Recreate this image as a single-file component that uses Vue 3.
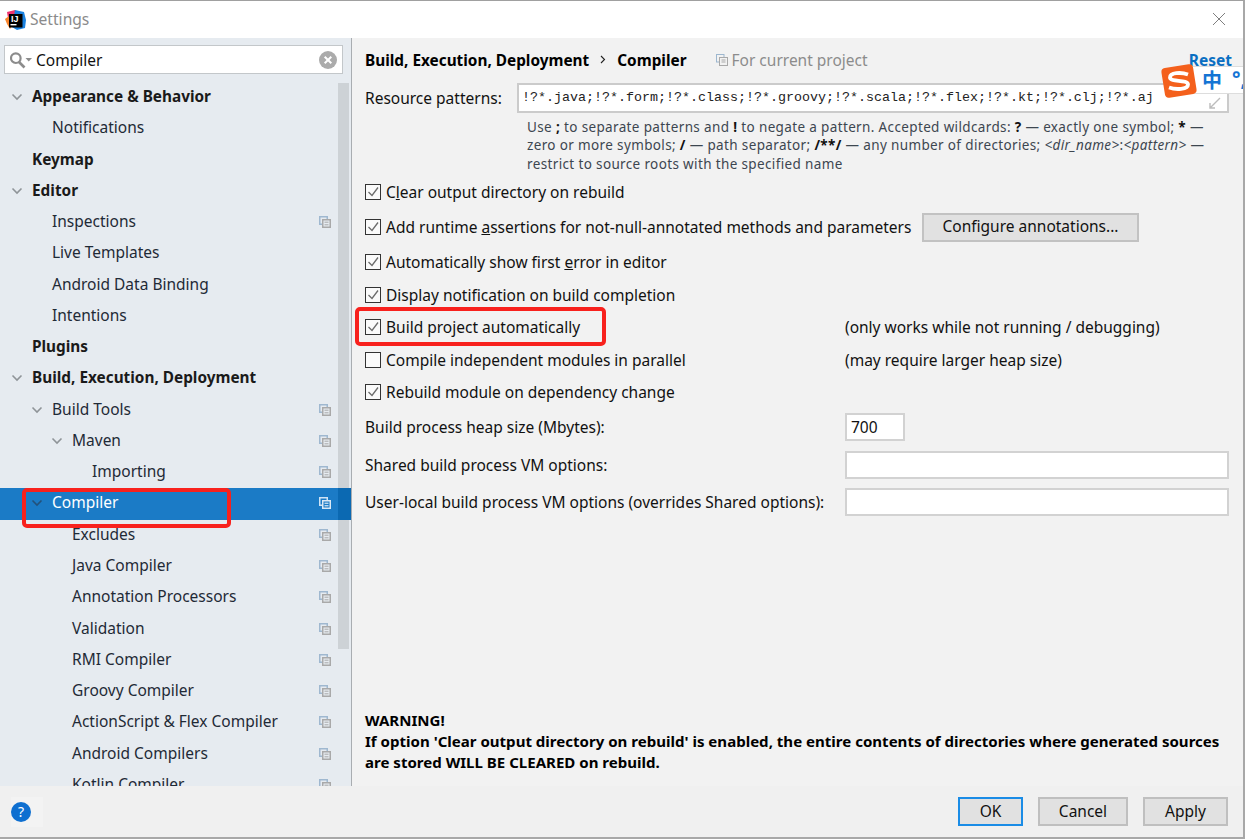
<script setup>
const tree = [
  { t: 'Appearance & Behavior', l: 0, b: 1, c: 1 },
  { t: 'Notifications', l: 1 },
  { t: 'Keymap', l: 0, b: 1 },
  { t: 'Editor', l: 0, b: 1, c: 1 },
  { t: 'Inspections', l: 1, p: 1 },
  { t: 'Live Templates', l: 1 },
  { t: 'Android Data Binding', l: 1 },
  { t: 'Intentions', l: 1 },
  { t: 'Plugins', l: 0, b: 1 },
  { t: 'Build, Execution, Deployment', l: 0, b: 1, c: 1 },
  { t: 'Build Tools', l: 1, c: 1, p: 1 },
  { t: 'Maven', l: 2, c: 1, p: 1 },
  { t: 'Importing', l: 3, p: 1 },
  { t: 'Compiler', l: 1, c: 1, p: 1, s: 1 },
  { t: 'Excludes', l: 2, p: 1 },
  { t: 'Java Compiler', l: 2, p: 1 },
  { t: 'Annotation Processors', l: 2, p: 1 },
  { t: 'Validation', l: 2, p: 1 },
  { t: 'RMI Compiler', l: 2, p: 1 },
  { t: 'Groovy Compiler', l: 2, p: 1 },
  { t: 'ActionScript & Flex Compiler', l: 2, p: 1 },
  { t: 'Android Compilers', l: 2, p: 1 },
  { t: 'Kotlin Compiler', l: 2, p: 1 }
]
const indent = (l) => ({ paddingLeft: 32 + l * 20 + 'px' })
const chevronLeft = (l) => ({ left: 11 + l * 20 + 'px' })
</script>

<template>
  <div class="window">
    <header class="titlebar">
      <span class="logo">
        <svg width="21" height="20" viewBox="0 0 21 20">
          <path d="M2 2 L10 0 L13 8 L4 14Z" fill="#f0326e" />
          <path d="M0 9 L4 6 L8 14 L5 19 L2 14Z" fill="#f9862d" />
          <path d="M10 0 L19 2 L21 10 L20 18 L12 20 L7 17Z" fill="#1b82e0" />
          <rect x="4" y="4" width="13.5" height="13.5" fill="#000" />
          <rect x="5.5" y="14" width="6" height="1.4" fill="#fff" />
        </svg>
        <span class="logo-text">IJ</span>
      </span>
      <span class="title">Settings</span>
      <svg class="close" width="14" height="14" viewBox="0 0 14 14">
        <path d="M1 1 L13 13 M13 1 L1 13" stroke="#7f7f7f" stroke-width="1" fill="none" />
      </svg>
    </header>

    <div class="body">
      <aside class="sidebar">
        <div class="search">
          <svg width="24" height="18" viewBox="0 0 24 18">
            <circle cx="5.8" cy="7.2" r="4.8" fill="none" stroke="#8c8c8c" stroke-width="2.2" />
            <path d="M9 11 L14.5 16.5" stroke="#8c8c8c" stroke-width="2.6" />
            <path d="M15.5 7 H22 L18.75 10.5Z" fill="#8c8c8c" />
          </svg>
          <span class="search-text">Compiler</span>
          <svg class="clear" width="18" height="18" viewBox="0 0 18 18">
            <circle cx="9" cy="9" r="9" fill="#ababab" />
            <path d="M5.7 5.7 L12.3 12.3 M12.3 5.7 L5.7 12.3" stroke="#fff" stroke-width="2" />
          </svg>
        </div>
        <div class="tree-wrap">
          <div class="scroll-track"><div class="scroll-thumb"></div></div>
          <div class="tree">
            <div
              v-for="n in tree"
              :key="n.t"
              class="node"
              :class="{ bold: n.b, sel: n.s }"
              :style="indent(n.l)"
            >
              <svg v-if="n.c" class="chev" :style="chevronLeft(n.l)" width="12" height="8" viewBox="0 0 12 8">
                <path d="M1.5 1.5 L6 6 L10.5 1.5" fill="none" stroke-width="1.6" />
              </svg>
              <span>{{ n.t }}</span>
              <svg v-if="n.p" class="proj" width="12" height="12" viewBox="0 0 12 12">
                <rect class="back" x=".75" y=".75" width="7.5" height="7.5" />
                <rect class="front" x="3.75" y="3.75" width="7.5" height="7.5" />
                <path class="lines" d="M5.5 6.2 H9.5 M5.5 8.8 H9.5" />
              </svg>
            </div>
          </div>
        </div>
      </aside>

      <main class="content">
        <div class="crumbs">
          <b>Build, Execution, Deployment</b>
          <svg class="sep" width="6" height="9" viewBox="0 0 6 9"><path d="M1 1 L4.5 4.5 L1 8" fill="none" stroke="#222" stroke-width="1.1" /></svg>
          <b>Compiler</b>
          <svg class="cur-proj" width="12" height="12" viewBox="0 0 12 12">
            <rect x=".5" y=".5" width="7.5" height="7.5" fill="none" stroke="#9db7cf" />
            <rect x="3.5" y="3.5" width="8" height="8" fill="#f2f2f2" stroke="#a9a9a9" />
            <path d="M5.5 6 H9.5 M5.5 8 H9.5" stroke="#a9a9a9" />
          </svg>
          <span class="for-proj">For current project</span>
          <a class="reset">Reset</a>
        </div>

        <div class="patterns">
          <label>Resource patterns:</label>
          <div class="pattern-input">
            <span>!?*.java;!?*.form;!?*.class;!?*.groovy;!?*.scala;!?*.flex;!?*.kt;!?*.clj;!?*.aj</span>
            <svg class="expand" width="12" height="12" viewBox="0 0 12 12">
              <path d="M11 1 L1 11 M1 6 V11 H6" fill="none" stroke="#bcbcbc" stroke-width="1.4" />
            </svg>
          </div>
        </div>
        <p class="help">
          Use <b>;</b> to separate patterns and <b>!</b> to negate a pattern. Accepted wildcards: <b>?</b> — exactly one symbol; <b>*</b> —<br />
          zero or more symbols; <b>/</b> — path separator; <b>/**/</b> — any number of directories; <i>&lt;dir_name&gt;</i>:<i>&lt;pattern&gt;</i> —<br />
          restrict to source roots with the specified name
        </p>

        <div class="opt"><span class="box"><svg viewBox="0 0 14 14"><path d="M2.5 7 L6 10.5 L12 2.5" /></svg></span><span>C<u>l</u>ear output directory on rebuild</span></div>
        <div class="opt tall">
          <span class="box"><svg viewBox="0 0 14 14"><path d="M2.5 7 L6 10.5 L12 2.5" /></svg></span>
          <span class="wide">Add runtime <u>a</u>ssertions for not-null-annotated methods and parameters</span>
          <button class="annot">Configure annotations...</button>
        </div>
        <div class="opt"><span class="box"><svg viewBox="0 0 14 14"><path d="M2.5 7 L6 10.5 L12 2.5" /></svg></span><span>Automatically show first <u>e</u>rror in editor</span></div>
        <div class="opt"><span class="box"><svg viewBox="0 0 14 14"><path d="M2.5 7 L6 10.5 L12 2.5" /></svg></span><span>Display notification on build completion</span></div>
        <div class="opt">
          <span class="box"><svg viewBox="0 0 14 14"><path d="M2.5 7 L6 10.5 L12 2.5" /></svg></span>
          <span class="lab">Build project automatically</span>
          <span class="note">(only works while not running / debugging)</span>
        </div>
        <div class="opt">
          <span class="box"></span>
          <span class="lab">Compile independent modules in parallel</span>
          <span class="note">(may require larger heap size)</span>
        </div>
        <div class="opt"><span class="box"><svg viewBox="0 0 14 14"><path d="M2.5 7 L6 10.5 L12 2.5" /></svg></span><span>Rebuild module on dependency change</span></div>

        <div class="fields">
          <label>Build process heap size (Mbytes):</label>
          <div class="field short">700</div>
          <label>Shared build process VM options:</label>
          <div class="field"></div>
          <label>User-local build process VM options (overrides Shared options):</label>
          <div class="field"></div>
        </div>

        <div class="warning">
          WARNING!<br />
          If option 'Clear output directory on rebuild' is enabled, the entire contents of directories where generated sources<br />
          are stored WILL BE CLEARED on rebuild.
        </div>
      </main>
    </div>

    <footer class="footer">
      <div class="help-btn"><span>?</span></div>
      <div class="buttons">
        <button class="btn ok">OK</button>
        <button class="btn cancel">Cancel</button>
        <button class="btn apply">Apply</button>
      </div>
    </footer>

    <div class="mark mark-tree"></div>
    <div class="mark mark-opt"></div>

    <div class="ime">
      <svg class="ime-s" width="38" height="36" viewBox="0 0 38 36">
        <rect x="3" y="3" width="32" height="30" rx="4" fill="#f4601c" transform="rotate(-9 19 18)" />
        <path d="M28 11.5 C21 9 10 9.5 10 14.5 C10 19.5 28 16 28 21.5 C28 26.5 16 27 9 24.5" fill="none" stroke="#fff" stroke-width="3.8" />
      </svg>
      <span class="ime-zh">中</span>
      <span class="ime-p">°,</span>
    </div>
  </div>
</template>

<style>
html, body { margin: 0; padding: 0; background: #fff; }
</style>

<style scoped>
.window {
  position: relative;
  width: 1245px;
  height: 839px;
  box-sizing: border-box;
  border-top: 1px solid #a0a0a0;
  border-right: 2px solid #a8a8a8;
  border-bottom: 2px solid #a8a8a8;
  display: flex;
  flex-direction: column;
  overflow: hidden;
  font-family: "Noto Sans", "Open Sans", sans-serif;
  font-size: 15.5px;
  color: #1a1a1a;
  background: #f2f2f2;
}
.titlebar {
  position: relative;
  height: 37px;
  flex: none;
  box-sizing: border-box;
  background: #fff;
  display: flex;
  align-items: center;
  padding: 0 0 2px 5px;
}
.logo { position: relative; flex: none; width: 21px; height: 20px; margin-top: 2px; }
.logo svg { display: block; }
.logo-text {
  position: absolute;
  left: 6px;
  top: 4px;
  font: bold 9px/10px "Liberation Sans", sans-serif;
  color: #fff;
}
.title { margin-left: 4px; color: #8b8b8b; font-size: 15.6px; }
.close { margin-left: auto; margin-right: 17px; }

.body { flex: 1; min-height: 0; display: flex; }
.sidebar {
  width: 352px;
  box-sizing: border-box;
  flex: none;
  background: #e6ebf0;
  border-right: 1px solid #a9adb1;
  display: flex;
  flex-direction: column;
  min-height: 0;
}
.search {
  margin: 7px 8px 0 4px;
  height: 29px;
  flex: none;
  box-sizing: border-box;
  background: #fff;
  border: 1px solid #c3c7ca;
  display: flex;
  align-items: center;
  padding: 0 5px;
}
.search-text { margin-left: 2px; color: #111; }
.clear { margin-left: auto; }
.tree-wrap { position: relative; flex: 1; min-height: 0; overflow: hidden; margin-top: 8px; }
.tree { position: relative; font-size: 15.5px; }
.scroll-track {
  position: absolute;
  right: 0;
  top: 0;
  bottom: 0;
  width: 13px;
  background: #e6ebf0;
}
.scroll-thumb {
  position: absolute;
  left: 0;
  top: 1px;
  width: 11px;
  height: 566px;
  background: #cdd2d6;
}
.node {
  position: relative;
  height: 31.27px;
  line-height: 29px;
  white-space: nowrap;
  color: #1f2a36;
}
.node.bold { font-weight: 700; color: #1a1a1a; font-size: 15.35px; }
.node.sel { background: #1b7bc6; color: #fff; }
.node.sel::after {
  content: "";
  position: absolute;
  right: 0;
  top: 0;
  bottom: 0;
  width: 13px;
  background: #0b69b2;
}
.chev { position: absolute; top: 11px; stroke: #8f9498; }
.sel .chev { stroke: #24517a; }
.proj { position: absolute; left: 319px; top: 9px; z-index: 1; }
.proj .back { fill: none; stroke: #9fb8d0; stroke-width: 1.5; }
.proj .front { fill: #e6ebf0; stroke: #a9a9a9; stroke-width: 1.5; }
.proj .lines { stroke: #a9a9a9; }
.sel .proj .back { stroke: #cfe3f5; }
.sel .proj .front { fill: #1b7bc6; stroke: #d9e8f5; }
.sel .proj .lines { stroke: #fff; }

.content {
  flex: 1;
  min-width: 0;
  box-sizing: border-box;
  padding: 0 14px 13px 13px;
  display: flex;
  flex-direction: column;
  background: #f2f2f2;
}
.crumbs {
  height: 45px;
  flex: none;
  box-sizing: border-box;
  padding-bottom: 2px;
  display: flex;
  align-items: center;
  color: #000;
}
.crumbs b { font-size: 15.35px; }
.sep { margin: 0 11px 0 11px; }
.cur-proj { margin-left: 29px; }
.for-proj { margin-left: 4px; color: #8c8c8c; }
.reset { margin-left: auto; color: #0a6fc2; font-weight: 700; margin-right: -3px; }
.patterns { display: flex; align-items: center; height: 30px; flex: none; }
.patterns label { width: 152px; flex: none; color: #111; }
.pattern-input {
  position: relative;
  flex: 1;
  height: 30px;
  box-sizing: border-box;
  background: #fff;
  border: 2px solid #cbcbcb;
  padding-left: 3px;
  line-height: 25px;
  font-family: "Liberation Mono", monospace;
  font-size: 13.33px;
  white-space: nowrap;
  color: #222;
}
.expand { position: absolute; right: 6px; bottom: 2px; }
.help {
  margin: 4.5px 0 0 162px;
  font-size: 13.5px;
  line-height: 18.5px;
  color: #3d4650;
  white-space: nowrap;
  letter-spacing: 0.36px;
}
.help b { color: #111; }
.opt {
  height: 32.5px;
  flex: none;
  display: flex;
  align-items: center;
  color: #111;
  white-space: nowrap;
}
.help + .opt { margin-top: 3px; }
.opt.tall { height: 37.5px; }
.box {
  width: 14px;
  height: 14px;
  flex: none;
  border: 1px solid #333;
  background: #fafafa;
  margin-right: 5px;
  display: block;
}
.box svg { display: block; width: 14px; height: 14px; }
.box path { fill: none; stroke: #6b6b6b; stroke-width: 1.3; }
.lab { width: 459px; flex: none; }
.wide { width: 536px; flex: none; }
.note { color: #111; }
.annot {
  width: 217px;
  height: 29px;
  box-sizing: border-box;
  background: #e1e1e1;
  border: 2px solid #c2c2c2;
  font: inherit;
  color: #111;
  padding: 0 0 2px;
}
.fields {
  display: grid;
  grid-template-columns: 480px 1fr;
  row-gap: 9.5px;
  align-items: center;
  margin-top: 4.5px;
  flex: none;
}
.fields label { color: #111; white-space: nowrap; }
.field {
  height: 28px;
  box-sizing: border-box;
  background: #fff;
  border: 2px solid #d2d2d2;
  line-height: 24px;
  padding-left: 4px;
  color: #111;
}
.field.short { width: 60px; }
.warning {
  margin-top: auto;
  font-weight: 700;
  line-height: 21px;
  color: #000;
  white-space: nowrap;
  font-size: 15.05px;
}

.footer {
  height: 51px;
  flex: none;
  background: #f0f0f0;
  display: flex;
  align-items: center;
  padding: 0 15px 0 11px;
  position: relative;
}
.help-btn {
  width: 32px;
  height: 30px;
  display: flex;
  align-items: center;
  background: #f3f3f3;
}
.help-btn span {
  width: 20px;
  height: 20px;
  border-radius: 50%;
  background: #0e6fd0;
  color: #fff;
  font-size: 14px;
  line-height: 20px;
  text-align: center;
}
.buttons { margin-left: auto; display: flex; gap: 15px; }
.btn {
  height: 29px;
  box-sizing: border-box;
  background: #e1e1e1;
  border: 2px solid #bfbfbf;
  font: inherit;
  color: #111;
  padding: 0 0 2px;
}
.ok { width: 65px; border-color: #1a8ce6; }
.cancel { width: 90px; }
.apply { width: 85px; }

.mark { position: absolute; border: 4px solid #f8211d; border-radius: 5px; box-sizing: border-box; pointer-events: none; }
.mark-tree { left: 22px; top: 487px; width: 209px; height: 40px; }
.mark-opt { left: 355px; top: 306px; width: 251px; height: 39px; }

.ime {
  position: absolute;
  left: 1178px;
  top: 65px;
  width: 67px;
  height: 28px;
  background: #fff;
  border: 1px solid #ddd;
  box-sizing: border-box;
  border-right: 0;
}
.ime-s { position: absolute; left: -19px; top: -4px; }
.ime-zh {
  position: absolute;
  left: 23px;
  top: 1px;
  font: 700 20px/24px "Noto Sans CJK SC", sans-serif;
  color: #1474d4;
}
.ime-p {
  position: absolute;
  left: 53px;
  top: 0;
  font: 700 20px/24px "Noto Sans", sans-serif;
  color: #1474d4;
}
</style>
